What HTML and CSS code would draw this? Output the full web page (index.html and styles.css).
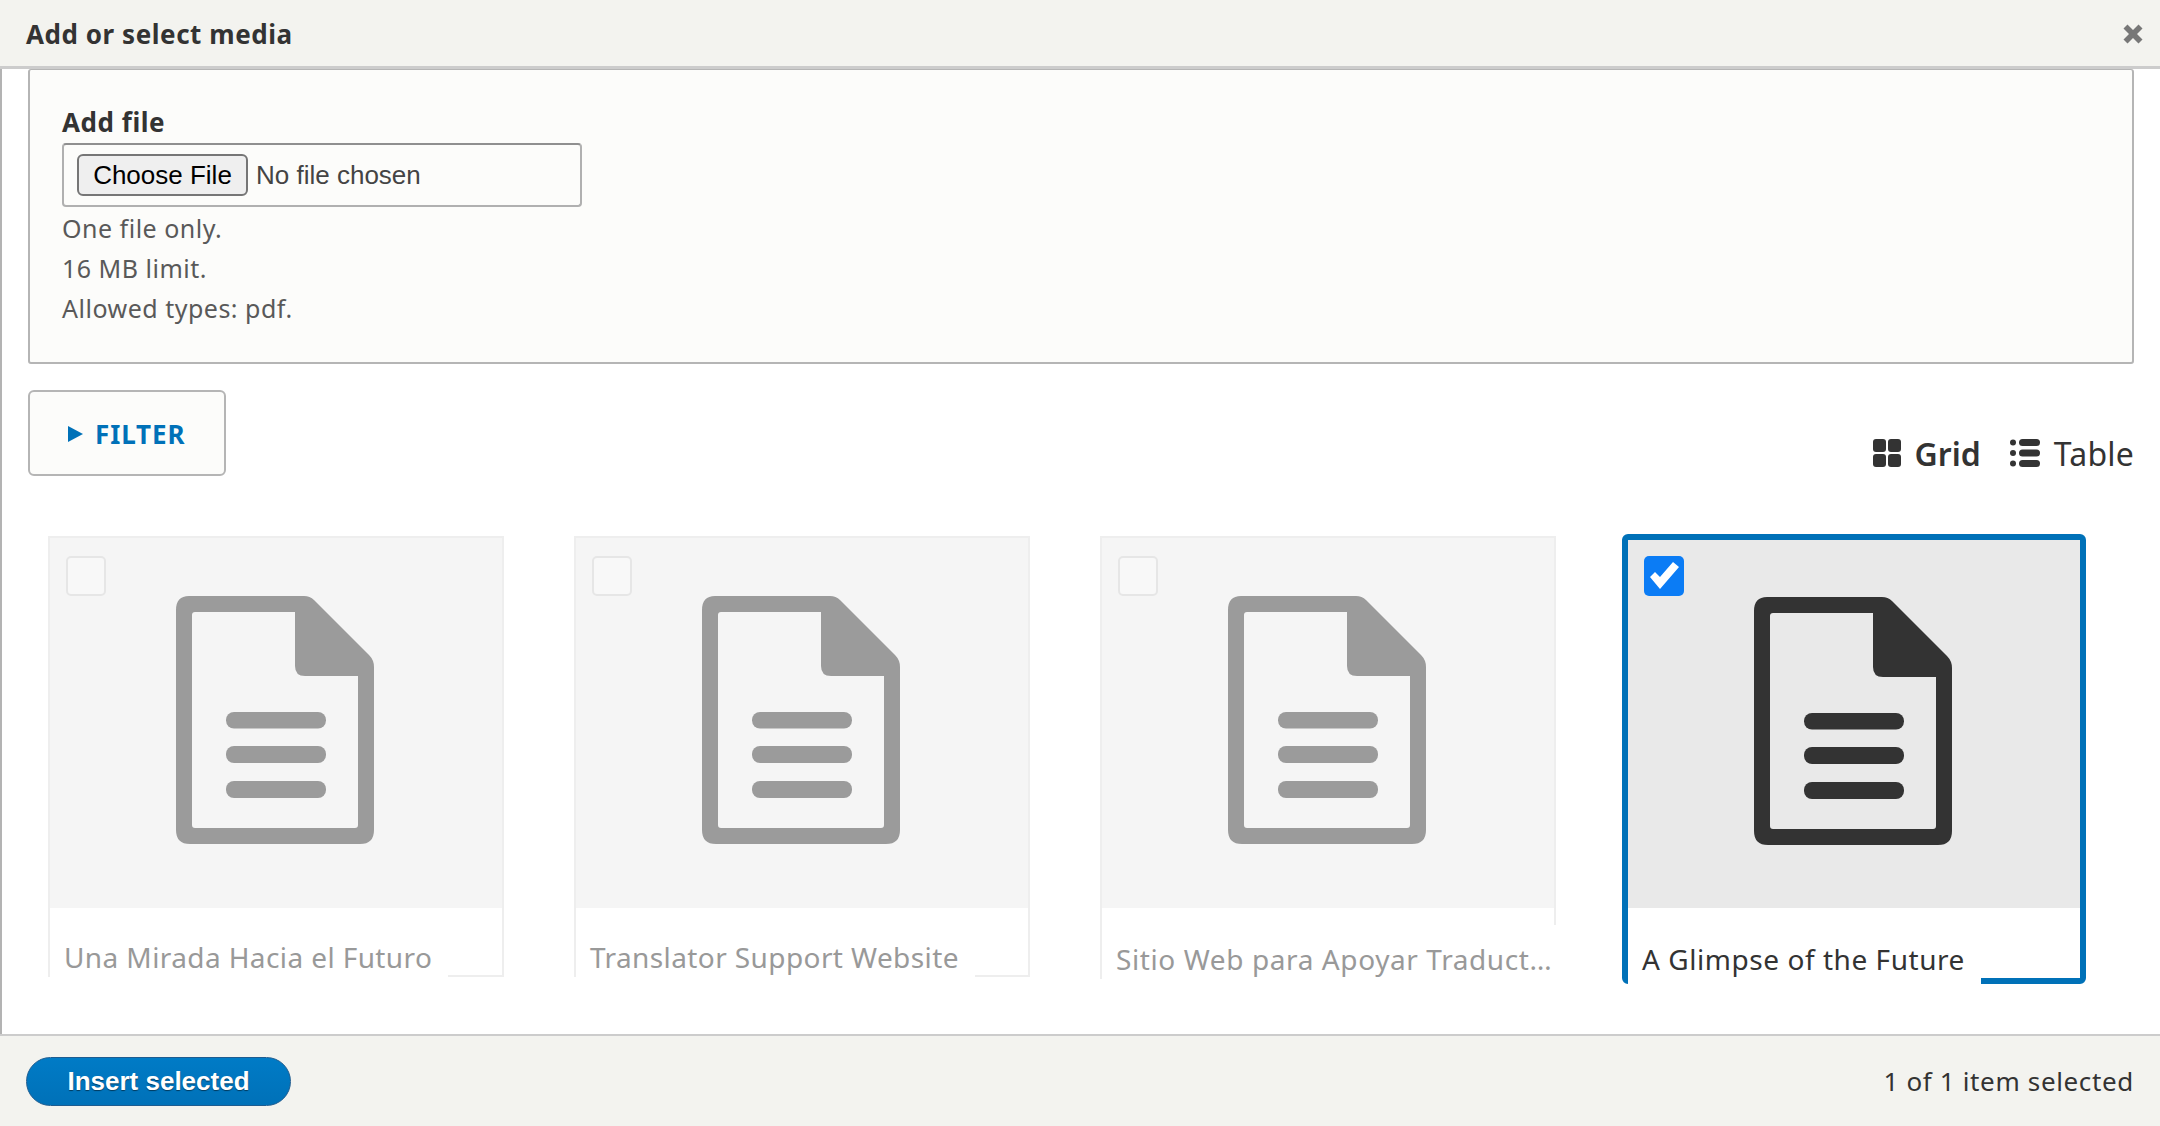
FILE: index.html
```html
<!DOCTYPE html>
<html lang="en">
<head>
<meta charset="utf-8">
<title>Add or select media</title>
<link rel="stylesheet" href="styles.css">
</head>
<body>
<svg class="defs" width="0" height="0" aria-hidden="true">
  <symbol id="doc" viewBox="0 0 200 250">
    <path fill-rule="evenodd" d="M13 1H128Q134 1 138 5L193 60Q198 65 198 72V235Q198 249 184 249H14Q0 249 0 235V15Q0 1 13 1ZM19 17Q16 17 16 20V230Q16 233 19 233H179Q182 233 182 230V81H129Q119 81 119 71V17Z"/>
    <rect x="50" y="117" width="100" height="16.500" rx="8"/>
    <rect x="50" y="151" width="100" height="17" rx="8"/>
    <rect x="50" y="186" width="100" height="17" rx="8"/>
  </symbol>
</svg>
<div class="dialog">
  <header class="dialog-head">
    <h1 class="dialog-title">Add or select media</h1>
    <svg class="close" viewBox="0 0 20 20" aria-label="Close"><path d="M4.5 0.5L10 6L15.500 0.5L19.500 4.500L14 10L19.500 15.500L15.500 19.500L10 14L4.500 19.500L0.500 15.500L6 10L0.500 4.500Z"/></svg>
  </header>
  <main class="dialog-body">
    <fieldset class="upload">
      <label class="upload-label" for="file">Add file</label>
      <input class="upload-input" id="file" type="file">
      <div class="upload-help">
        <div>One file only.</div>
        <div>16 MB limit.</div>
        <div>Allowed types: pdf.</div>
      </div>
    </fieldset>
    <div class="toolbar">
      <div class="filter"><span class="filter-arrow"></span><span class="filter-text">FILTER</span></div>
      <nav class="views">
        <a class="view view-active">
          <svg class="view-icon" width="28" height="28" viewBox="0 0 28 28"><rect x="0" y="0" width="13" height="13" rx="3"/><rect x="15" y="0" width="13" height="13" rx="3"/><rect x="0" y="15" width="13" height="13" rx="3"/><rect x="15" y="15" width="13" height="13" rx="3"/></svg>
          <span>Grid</span>
        </a>
        <a class="view">
          <svg class="view-icon" width="30" height="28" viewBox="0 0 30 28"><circle cx="3" cy="3.500" r="3"/><circle cx="3" cy="14" r="3"/><circle cx="3" cy="24.500" r="3"/><rect x="9" y="0" width="21" height="7" rx="3.500"/><rect x="9" y="10.500" width="21" height="7" rx="3.500"/><rect x="9" y="21" width="21" height="7" rx="3.500"/></svg>
          <span>Table</span>
        </a>
      </nav>
    </div>
    <ul class="media-grid">
      <li class="card">
        <div class="card-image"><span class="check"></span><svg class="doc"><use href="#doc"/></svg></div>
        <div class="card-title">Una Mirada Hacia el Futuro</div>
      </li>
      <li class="card">
        <div class="card-image"><span class="check"></span><svg class="doc"><use href="#doc"/></svg></div>
        <div class="card-title">Translator Support Website</div>
      </li>
      <li class="card card-low">
        <div class="card-image"><span class="check"></span><svg class="doc"><use href="#doc"/></svg></div>
        <div class="card-title card-title-long">Sitio Web para Apoyar Traductores</div>
      </li>
      <li class="card card-selected">
        <div class="card-image"><span class="check check-on"><svg width="40" height="40" viewBox="0 0 40 40"><path d="M6 21L11 16L16 21L29 6L35 11L16 33Z"/></svg></span><svg class="doc"><use href="#doc"/></svg></div>
        <div class="card-title">A Glimpse of the Future</div>
      </li>
    </ul>
  </main>
  <footer class="dialog-foot">
    <button class="insert" type="button">Insert selected</button>
    <div class="status">1 of 1 item selected</div>
  </footer>
</div>
</body>
</html>
```

FILE: styles.css
```css
* { box-sizing: border-box; }
html, body { margin: 0; height: 100%; background: #fff; }
body { font-family: "Noto Sans", "Liberation Sans", sans-serif; color: #333; font-size: 26px; }
.defs { position: absolute; }

.dialog { display: flex; flex-direction: column; height: 1126px; overflow: hidden; }
.dialog-head { flex: none; height: 69px; display: flex; align-items: center; justify-content: space-between; padding: 2px 17px 0 26px; background: #f3f3ef; border-bottom: 3px solid #ccc; }
.dialog-title { margin: 0; font-size: 26px; font-weight: 700; color: #333; letter-spacing: 0.55px; }
.close { width: 20px; height: 20px; fill: #777; }

.dialog-body { flex: 1; min-height: 0; border-left: 2px solid #b3b3b3; padding: 0 26px; background: #fff; }
.upload { margin: 0; padding: 32px 32px 0; height: 295px; min-width: 0; background: #fcfcfa; border: 2px solid #b5b5b5; border-top-width: 1px; border-radius: 3px; }
.upload-label { display: block; font-weight: 700; font-size: 26px; line-height: 40px; letter-spacing: 0.55px; }
.upload-input { display: block; width: 520px; height: 64px; margin-top: 1px; padding: 9px 13px; border: 2px solid #b0b0b0; border-top-color: #8f8f8f; border-radius: 4px; background: #fcfcfa; font: 26px "Liberation Sans", Arial, sans-serif; color: #444; }
.upload-input::file-selector-button { width: 171px; height: 42px; margin-right: 8px; padding: 0; border: 2px solid #767676; border-radius: 6px; background: #efefef; color: #000; font: 26px "Liberation Sans", Arial, sans-serif; }
.upload-help { margin-top: 1px; color: #595959; font-size: 25px; line-height: 40px; letter-spacing: 0.5px; }

.toolbar { display: flex; justify-content: space-between; align-items: flex-start; margin-top: 26px; }
.filter { display: flex; align-items: center; width: 198px; height: 86px; padding: 2px 0 0 38px; background: #fcfcfa; border: 2px solid #b5b5b5; border-radius: 6px; color: #0071b8; font-weight: 700; font-size: 26px; letter-spacing: 0.9px; }
.filter-arrow { width: 0; height: 0; margin-right: 12px; border-left: 15px solid #0071b8; border-top: 8.500px solid transparent; border-bottom: 8.500px solid transparent; }
.views { display: flex; gap: 29px; margin-top: 47px; }
.view { display: flex; align-items: center; gap: 14px; height: 32px; font-size: 32px; color: #333; letter-spacing: 0.2px; }
.view-active { font-weight: 600; letter-spacing: 0; }
.view-icon { fill: #333; flex: none; }

.media-grid { display: grid; grid-template-columns: repeat(4, 456px); column-gap: 70px; margin: 60px 0 0; padding: 0 0 0 20px; list-style: none; }
.card { position: relative; height: 441px; border: 2px solid #eee; background: #fff; }
.card-low { height: 443px; }
.card-image { position: relative; display: flex; justify-content: center; height: 370px; padding-top: 57px; background: #f5f5f5; }
.doc { width: 200px; height: 250px; fill: #9b9b9b; }
.check { position: absolute; left: 16px; top: 18px; width: 40px; height: 40px; background: #f8f8f8; border: 2px solid #e6e6e6; border-radius: 5px; }
.card-title { position: relative; display: block; width: max-content; max-width: 100%; margin: 17px 0 -20px; padding: 14px 16px 14px 14px; background: #fff; color: #999; font-size: 28px; line-height: 36px; letter-spacing: 0.4px; white-space: nowrap; overflow: hidden; text-overflow: ellipsis; }
.card-title-long { width: calc(100% + 2px); max-width: none; padding-right: 2px; padding-top: 16px; letter-spacing: 0.6px; }
.card-selected { margin: -2px -4px 0; height: 450px; border: 6px solid #0071b8; border-radius: 6px; }
.card-selected .card-image { background: #e9e9e9; height: 368px; padding-top: 56px; }
.card-selected .doc { fill: #333; }
.card-selected .check { top: 16px; left: 16px; }
.card-selected .card-title { color: #333; padding-top: 16px; letter-spacing: 0.55px; }
.check-on { background: #0b7cf5; border: 0; border-radius: 5px; }
.check-on svg { display: block; fill: #fff; }

.dialog-foot { flex: none; height: 92px; display: flex; align-items: center; justify-content: space-between; padding: 0 26px; background: #f3f3ef; border-top: 2px solid #ccc; }
.insert { width: 265px; height: 49px; padding: 0; border: 1px solid #1e5c90; border-radius: 25px; background: linear-gradient(to bottom, #007bc6, #0071b8); color: #fff; font: 700 26px "Liberation Sans", Arial, sans-serif; text-shadow: 0 1px 1px rgba(0, 0, 0, 0.5); }
.status { font-size: 26px; color: #333; letter-spacing: 0.65px; }
```
